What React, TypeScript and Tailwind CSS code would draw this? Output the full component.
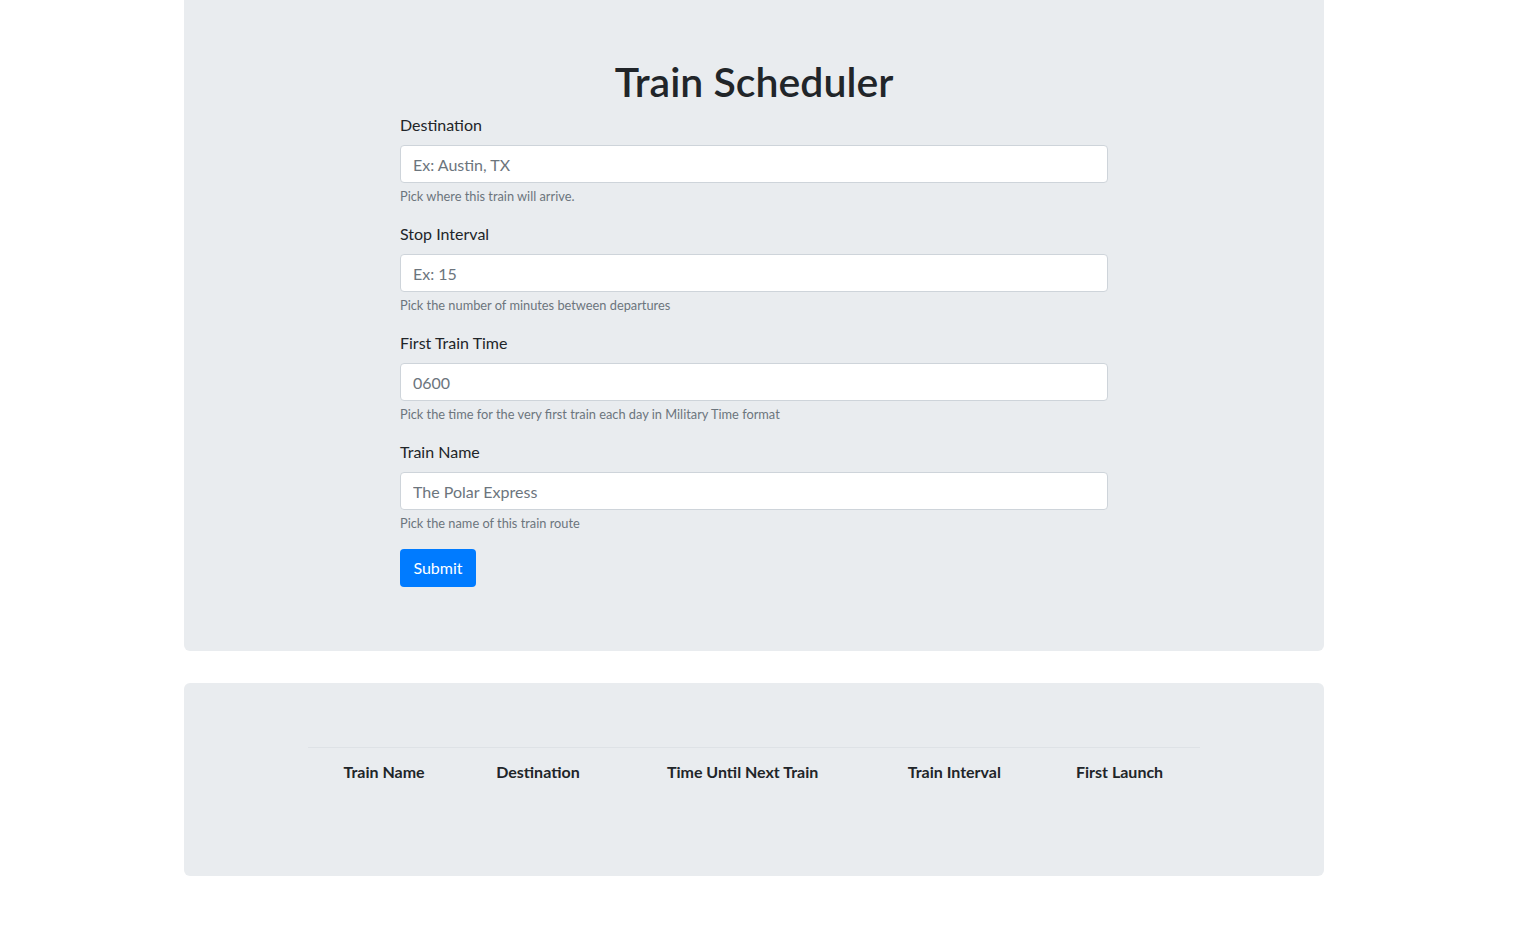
const fields = [
  {
    id: "destination",
    label: "Destination",
    placeholder: "Ex: Austin, TX",
    help: "Pick where this train will arrive.",
  },
  {
    id: "interval",
    label: "Stop Interval",
    placeholder: "Ex: 15",
    help: "Pick the number of minutes between departures",
  },
  {
    id: "firstTrain",
    label: "First Train Time",
    placeholder: "0600",
    help: "Pick the time for the very first train each day in Military Time format",
  },
  {
    id: "trainName",
    label: "Train Name",
    placeholder: "The Polar Express",
    help: "Pick the name of this train route",
  },
];

const columns = [
  "Train Name",
  "Destination",
  "Time Until Next Train",
  "Train Interval",
  "First Launch",
];

export default function App() {
  return (
    <div className="min-h-[950px] bg-white font-['Lato','Noto_Sans',sans-serif] text-[#212529]">
      <div className="ml-[184px] w-[1140px]">
        <div className="mb-8 rounded-b-md bg-[#e9ecef] px-8 py-16">
          <h1 className="mb-[13px] text-center text-[41px] font-semibold leading-[36px]">
            Train Scheduler
          </h1>
          <form
            className="mx-auto w-[708px]"
            onSubmit={(e) => e.preventDefault()}
          >
            {fields.map((field) => (
              <div key={field.id} className="mb-4">
                <label
                  htmlFor={field.id}
                  className="mb-2 block text-base leading-6"
                >
                  {field.label}
                </label>
                <input
                  id={field.id}
                  type="text"
                  placeholder={field.placeholder}
                  className="block h-[38px] w-full rounded border border-[#ced4da] bg-white px-3 text-base text-[#495057] placeholder:text-[#6c757d] focus:outline-none"
                />
                <small className="mt-1 block text-[12.8px] leading-[19px] text-[#6c757d]">
                  {field.help}
                </small>
              </div>
            ))}
            <button
              type="submit"
              className="h-[38px] w-[76px] rounded bg-[#007bff] text-base text-white"
            >
              Submit
            </button>
          </form>
        </div>

        <div className="rounded-md bg-[#e9ecef] px-8 py-16">
          <table className="mx-auto mb-4 w-[892px] border-collapse text-center">
            <thead>
              <tr className="border-t border-[#dee2e6]">
                {columns.map((col) => (
                  <th key={col} className="p-3 text-base font-bold leading-6">
                    {col}
                  </th>
                ))}
              </tr>
            </thead>
            <tbody />
          </table>
        </div>
      </div>
    </div>
  );
}
